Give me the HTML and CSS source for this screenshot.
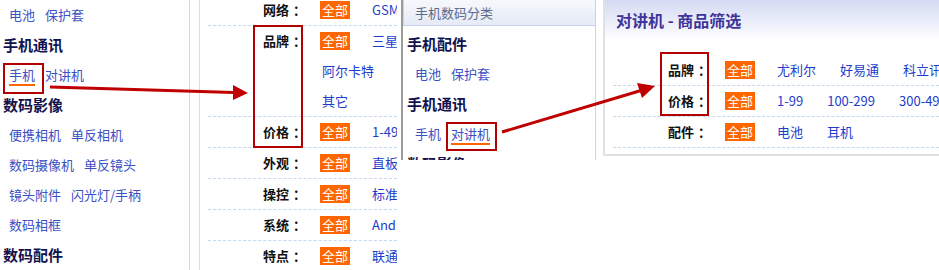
FILE: index.html
```html
<!DOCTYPE html>
<html lang="zh-CN">
<head>
    <meta charset="UTF-8">
    <title>手机数码分类 - 商品筛选</title>
    <link rel="stylesheet" href="styles.css">
</head>
<body>
    <div class="canvas">
        <!-- Shot 1: category sidebar -->
        <div class="shot side-a">
            <div class="cat-links"><a href="#">电池</a><a href="#">保护套</a></div>
            <h3 class="cat-title">手机通讯</h3>
            <div class="cat-links"><a href="#" class="on">手机</a><a href="#">对讲机</a></div>
            <h3 class="cat-title">数码影像</h3>
            <div class="cat-links">
                <a href="#">便携相机</a><a href="#">单反相机</a>
                <a href="#">数码摄像机</a><a href="#">单反镜头</a>
                <a href="#">镜头附件</a><a href="#">闪光灯/手柄</a>
                <a href="#">数码相框</a>
            </div>
            <h3 class="cat-title">数码配件</h3>
        </div>

        <!-- Shot 2: phone filters -->
        <div class="shot filter-b">
            <div class="filter-row">
                <span class="filter-label">网络<span class="colon">：</span></span>
                <div class="filter-vals"><a href="#" class="all">全部</a><a href="#">GSM</a></div>
            </div>
            <div class="filter-row">
                <span class="filter-label">品牌<span class="colon">：</span></span>
                <div class="filter-vals wrap"><a href="#" class="all">全部</a><a href="#">三星</a><a href="#">阿尔卡特</a><a href="#">其它</a></div>
            </div>
            <div class="filter-row">
                <span class="filter-label">价格<span class="colon">：</span></span>
                <div class="filter-vals"><a href="#" class="all">全部</a><a href="#">1-499</a></div>
            </div>
            <div class="filter-row">
                <span class="filter-label">外观<span class="colon">：</span></span>
                <div class="filter-vals"><a href="#" class="all">全部</a><a href="#">直板</a></div>
            </div>
            <div class="filter-row">
                <span class="filter-label">操控<span class="colon">：</span></span>
                <div class="filter-vals"><a href="#" class="all">全部</a><a href="#">标准</a></div>
            </div>
            <div class="filter-row">
                <span class="filter-label">系统<span class="colon">：</span></span>
                <div class="filter-vals"><a href="#" class="all">全部</a><a href="#">Android</a></div>
            </div>
            <div class="filter-row">
                <span class="filter-label">特点<span class="colon">：</span></span>
                <div class="filter-vals"><a href="#" class="all">全部</a><a href="#">联通</a></div>
            </div>
        </div>

        <!-- Shot 3: category box -->
        <div class="shot side-c">
            <div class="side-c-head">手机数码分类</div>
            <div class="side-c-body">
                <h3 class="cat-title">手机配件</h3>
                <div class="cat-links"><a href="#">电池</a><a href="#">保护套</a></div>
                <h3 class="cat-title">手机通讯</h3>
                <div class="cat-links"><a href="#">手机</a><a href="#" class="on">对讲机</a></div>
                <h3 class="cat-title">数码影像</h3>
            </div>
        </div>

        <!-- Shot 4: walkie-talkie filters -->
        <div class="shot filter-d">
            <h2 class="filter-d-head">对讲机 - 商品筛选</h2>
            <div class="filter-d-body">
                <div class="filter-row">
                    <span class="filter-label">品牌<span class="colon">：</span></span>
                    <div class="filter-vals"><a href="#" class="all">全部</a><a href="#">尤利尔</a><a href="#">好易通</a><a href="#">科立讯</a></div>
                </div>
                <div class="filter-row">
                    <span class="filter-label">价格<span class="colon">：</span></span>
                    <div class="filter-vals"><a href="#" class="all">全部</a><a href="#">1-99</a><a href="#">100-299</a><a href="#">300-499</a></div>
                </div>
                <div class="filter-row">
                    <span class="filter-label">配件<span class="colon">：</span></span>
                    <div class="filter-vals"><a href="#" class="all">全部</a><a href="#">电池</a><a href="#">耳机</a></div>
                </div>
            </div>
        </div>

        <!-- annotations -->
        <div class="mark mark-a"></div>
        <div class="mark mark-b"></div>
        <div class="mark mark-c"></div>
        <div class="mark mark-d"></div>
        <svg class="arrows" width="939" height="270" viewBox="0 0 939 270">
            <line x1="50" y1="87" x2="234" y2="92.5" stroke="#c00000" stroke-width="3"/>
            <polygon points="248,93 233,85 233,100" fill="#c00000"/>
            <line x1="502" y1="132" x2="641" y2="90.5" stroke="#c00000" stroke-width="3"/>
            <polygon points="655,86 637,83 642,98" fill="#c00000"/>
        </svg>
    </div>
</body>
</html>
```

FILE: styles.css
```css
body {
    margin: 0;
    background: #fff;
    font-family: "Noto Sans CJK SC", "Liberation Sans", sans-serif;
    font-size: 13px;
    color: #111;
}
a {
    text-decoration: none;
    color: #2c44c8;
}
.canvas {
    position: relative;
    width: 939px;
    height: 270px;
    overflow: hidden;
}

/* each screenshot sits on the canvas where it was pasted */
.shot {
    position: absolute;
    top: 0;
    box-sizing: border-box;
    overflow: hidden;
    background: #fff;
}

/* category lists */
.cat-title {
    margin: 0;
    font-size: 15px;
    line-height: 30px;
    color: #12124e;
}
.cat-links {
    display: flex;
    flex-wrap: wrap;
    padding-left: 1px;
    line-height: 30px;
}
.cat-links a {
    padding: 0 5px;
    color: #3b50c4;
}
.cat-links a.on {
    text-decoration: underline 2px #f60;
    text-underline-offset: 4px;
}

.side-a {
    left: 0;
    width: 190px;
    height: 270px;
    padding-left: 3px;
    border-right: 1px solid #cbd5ef;
}

.side-c {
    left: 401px;
    width: 195px;
    height: 160px;
    border-left: 2px solid #9c9c9c;
    border-right: 1px solid #c6d2ee;
}
.side-c-head {
    height: 25px;
    line-height: 25px;
    padding-left: 11px;
    border-left: 1px solid #c6d2ee;
    border-bottom: 1px solid #c6d2ee;
    background: linear-gradient(#f6f8fc, #e5eaf5);
    color: #5d6b8d;
}
.side-c-body {
    padding: 3px 0 0 4px;
}
.side-c .cat-links {
    padding-left: 3px;
}

/* filter rows */
.filter-row {
    display: flex;
    line-height: 30px;
    border-bottom: 1px dashed #c5d8f0;
}
.filter-label {
    flex: none;
    box-sizing: border-box;
    width: 112px;
    padding-right: 18px;
    text-align: right;
    font-weight: bold;
    color: #111;
}
.filter-label .colon {
    display: inline-block;
    width: 13px;
    text-align: center;
    text-indent: 4px;
}
.filter-vals {
    flex: none;
    display: flex;
    align-items: center;
    white-space: nowrap;
}
.filter-vals a {
    padding: 0 2px;
    margin-right: 20px;
    color: #1c3dcc;
}
.filter-vals a.all {
    background: #f60;
    color: #fff;
    line-height: 18px;
}
.filter-vals.wrap {
    flex-wrap: wrap;
    width: 104px;
}

.filter-b {
    top: -5px;
    left: 199px;
    width: 198px;
    height: 280px;
    padding-left: 8px;
    border-left: 1px solid #dedede;
}

.filter-d {
    left: 603px;
    width: 336px;
    height: 156px;
    border-left: 2px solid #e1e1e1;
    border-bottom: 2px solid #e1e1e1;
}
.filter-d-head {
    margin: 0;
    height: 40px;
    line-height: 40px;
    padding-left: 11px;
    background: linear-gradient(#d3daf3, #fff);
    font-size: 16px;
    font-weight: bold;
    color: #40349a;
}
.filter-d-body {
    padding: 15px 0 6px 8px;
}

/* red annotation boxes and arrows */
.mark {
    position: absolute;
    box-sizing: border-box;
    border: 2px solid #b30000;
}
.mark-a { left: 3px; top: 63px; width: 41px; height: 31px; }
.mark-b { left: 253px; top: 25px; width: 50px; height: 123px; }
.mark-c { left: 446px; top: 122px; width: 51px; height: 29px; }
.mark-d { left: 660px; top: 52px; width: 49px; height: 64px; }
.arrows {
    position: absolute;
    left: 0;
    top: 0;
    pointer-events: none;
}
```
